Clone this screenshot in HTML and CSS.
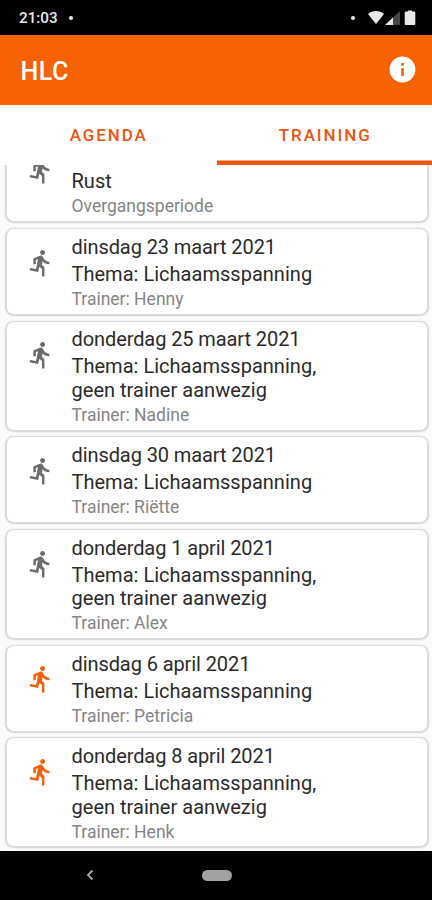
FILE: index.html
```
<!DOCTYPE html>
<html lang="nl">
<head>
<meta charset="utf-8">
<title>HLC</title>
<link rel="stylesheet" href="styles.css">
</head>
<body>
<svg width="0" height="0" class="defs"><symbol id="run" viewBox="0 0 24 24"><path d="M13.49 5.48c1.1 0 2-.9 2-2s-.9-2-2-2-2 .9-2 2 .9 2 2 2zm-3.6 13.9l1-4.4 2.1 2v6h2v-7.5l-2.1-2 .6-3c1.3 1.5 3.3 2.5 5.5 2.5v-2c-1.9 0-3.5-1-4.3-2.4l-1-1.6c-.4-.6-1-1-1.7-1-.3 0-.5.1-.8.1l-5.2 2.2v4.7h2v-3.4l1.8-.7-1.6 8.1-4.9-1-.4 2 7 1.4z"/></symbol></svg>
<div class="status">
  <span class="clock">21:03</span><i class="dot"></i>
  <i class="dot end"></i>
  <svg class="signals" width="48" height="16" viewBox="0 0 48 16">
    <path fill="#e8e8e8" d="M0 4C4-.1 12-.1 16 4L8 14z"/>
    <path fill="#444" d="M32 1v14H17z"/><path fill="#e8e8e8" d="M25 7.5V15h-8z"/>
    <path fill="#e8e8e8" d="M40 1.5V.5h4v1h2c.8 0 1.300.5 1.300 1.300V14c0 .6-.5 1-1 1h-8.600c-.6 0-1-.4-1-1V2.800c0-.8.5-1.300 1.300-1.300z"/>
  </svg>
</div>
<header class="appbar">
  <h1>HLC</h1>
  <svg width="31" height="31" viewBox="0 0 24 24"><path fill="#fff" d="M12 2C6.480 2 2 6.480 2 12s4.480 10 10 10 10-4.480 10-10S17.520 2 12 2zm1 15h-2v-6h2v6zm0-8h-2V7h2v2z"/></svg>
</header>
<nav class="tabs"><span>AGENDA</span><span class="active">TRAINING</span></nav>
<main class="list">
  <article class="card"><svg class="run"><use href="#run"/></svg><div><p class="date"></p><p>Rust</p><small>Overgangsperiode</small></div></article>
  <article class="card"><svg class="run"><use href="#run"/></svg><div><p class="date">dinsdag 23 maart 2021</p><p>Thema: Lichaamsspanning</p><small>Trainer: Henny</small></div></article>
  <article class="card"><svg class="run"><use href="#run"/></svg><div><p class="date">donderdag 25 maart 2021</p><p>Thema: Lichaamsspanning,<br>geen trainer aanwezig</p><small>Trainer: Nadine</small></div></article>
  <article class="card"><svg class="run"><use href="#run"/></svg><div><p class="date">dinsdag 30 maart 2021</p><p>Thema: Lichaamsspanning</p><small>Trainer: Riëtte</small></div></article>
  <article class="card"><svg class="run"><use href="#run"/></svg><div><p class="date">donderdag 1 april 2021</p><p>Thema: Lichaamsspanning,<br>geen trainer aanwezig</p><small>Trainer: Alex</small></div></article>
  <article class="card upcoming"><svg class="run"><use href="#run"/></svg><div><p class="date">dinsdag 6 april 2021</p><p>Thema: Lichaamsspanning</p><small>Trainer: Petricia</small></div></article>
  <article class="card upcoming"><svg class="run"><use href="#run"/></svg><div><p class="date">donderdag 8 april 2021</p><p>Thema: Lichaamsspanning,<br>geen trainer aanwezig</p><small>Trainer: Henk</small></div></article>
</main>
<footer class="navbar">
  <svg width="8" height="12" viewBox="0 0 8 12"><path d="M6.500 1.500L2 6l4.500 4.500" fill="none" stroke="#aaa" stroke-width="1.800"/></svg>
  <i class="pill"></i>
</footer>
</body>
</html>
```
FILE: styles.css
```
* { box-sizing: border-box; }
body {
  margin: 0;
  height: 900px;
  display: flex;
  flex-direction: column;
  overflow: hidden;
  background: #fff;
  font-family: Roboto, "Liberation Sans", sans-serif;
}
.defs { position: absolute; }
.status {
  height: 34.5px;
  flex: none;
  display: flex;
  align-items: center;
  padding: 1px 16px 0 19px;
  background: #000;
  color: #e8e8e8;
}
.clock { width: 38px; font-size: 15.2px; font-weight: 500; }
.dot { width: 4px; height: 4px; margin-left: 12px; border-radius: 50%; background: #eee; }
.dot.end { margin-left: auto; margin-right: 13px; }
.appbar {
  height: 70.5px;
  flex: none;
  display: flex;
  align-items: center;
  justify-content: space-between;
  padding: 0 14px 0 20.500px;
  background: #f66206;
  color: #fff;
}
h1 { margin: 3px 0 0; font-size: 25px; font-weight: 500; letter-spacing: .5px; }
.tabs { height: 60px; flex: none; display: flex; }
.tabs span {
  flex: 1;
  padding-left: 2px;
  line-height: 61px;
  text-align: center;
  font-size: 17px;
  font-weight: 500;
  letter-spacing: 1.9px;
  color: #ed5510;
}
.tabs .active { box-shadow: inset 0 -4.500px #f25508; margin-left: 1px; }
.list { flex: 1; min-height: 0; overflow: hidden; padding: 0 4.500px 0 6px; background: #fbfbfa; }
.card {
  display: flex;
  min-height: 87px;
  margin-bottom: 5.700px;
  padding: 6.800px 0 3.600px 19px;
  border: 1px solid #dfdddc;
  border-radius: 8px;
  background: #fff;
  box-shadow: 0 .5px 1.500px .5px rgba(0, 0, 0, .16);
}
.card:first-child { margin-top: -29.700px; }
.run { width: 29.500px; height: 30px; flex: none; margin: 11.800px 16px 0 0; fill: #6b6b6b; }
.upcoming .run { fill: #f4600c; }
.card p { margin: 0 0 2.800px; font-size: 20px; line-height: 23.400px; letter-spacing: .02px; color: #2b2b2b; }
.card .date { height: 23.400px; margin-bottom: 3.600px; letter-spacing: -.09px; }
.card small { display: block; font-size: 17.500px; line-height: 21px; color: #858585; }
.navbar {
  height: 49.500px;
  flex: none;
  display: flex;
  align-items: center;
  padding-left: 86px;
  background: #000;
}
.pill { width: 30px; height: 11px; margin-left: 107.500px; border-radius: 6px; background: #a2a2a2; }
```
